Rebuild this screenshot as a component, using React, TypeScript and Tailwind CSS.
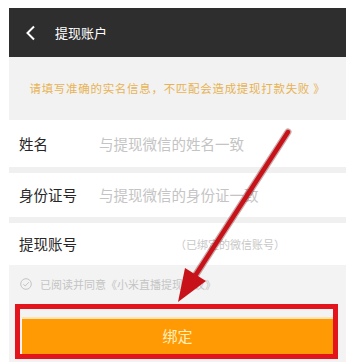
import React from "react";

const font = { fontFamily: '"Noto Sans CJK SC", "Noto Sans", sans-serif' };

const Row = ({ label, hint, hintClass, h }: { label: string; hint: string; hintClass: string; h: string }) => (
  <div className={`flex items-center bg-white ${h}`}>
    <span className="w-[90px] pl-[10px] text-[14.5px] text-[#262626]">{label}</span>
    <span className={hintClass}>{hint}</span>
  </div>
);

const App = () => {
  return (
    <div className="relative w-[353px] h-[362px] overflow-hidden bg-white" style={font}>
      <div className="ml-[9px] w-[337px] pt-[8px] flex flex-col">
        <div className="h-[49px] bg-[#2e2e2e] flex items-center">
          <svg className="ml-[16px]" width="11" height="16" viewBox="0 0 11 16">
            <path d="M9 1.5 L2.5 8 L9 14.5" fill="none" stroke="#fff" strokeWidth="2" />
          </svg>
          <span className="ml-[19px] text-[13px] text-white">提现账户</span>
        </div>
        <div className="h-[63px] bg-[#f2f2f2] flex items-center justify-center">
          <span className="text-[11.5px] text-[#e8b253] tracking-[0.7px]">
            请填写准确的实名信息，不匹配会造成提现打款失败 》
          </span>
        </div>
        <Row label="姓名" hint="与提现微信的姓名一致" h="h-[47px]" hintClass="text-[14.5px] text-[#c4c4c4]" />
        <div className="h-[6px] bg-[#f0f0f0]" />
        <Row label="身份证号" hint="与提现微信的身份证一致" h="h-[44px]" hintClass="text-[14.5px] text-[#c4c4c4]" />
        <div className="h-[6px] bg-[#f0f0f0]" />
        <Row label="提现账号" hint="（已绑定的微信账号）" h="h-[42px]" hintClass="ml-[76px] text-[11px] text-[#c8c8c8]" />
        <div className="h-[97px] bg-[#f3f3f3] flex flex-col">
          <div className="h-[38px] flex items-center pl-[11px] gap-[8px]">
            <svg width="12" height="12" viewBox="0 0 12 12">
              <circle cx="6" cy="6" r="5.3" fill="none" stroke="#c4c4c4" strokeWidth="1" />
              <path d="M3.3 6.2 L5.2 8 L8.8 4.2" fill="none" stroke="#c4c4c4" strokeWidth="1" />
            </svg>
            <span className="text-[11px] text-[#c4c4c4]">已阅读并同意《小米直播提现协议》</span>
          </div>
          <div className="mt-[14px] mx-[13px] h-[37px] bg-[#ff9a05] border-t-2 border-[#fde3b0] flex items-center justify-center">
            <span className="text-[15px] text-[#fff0bf]">绑定</span>
          </div>
        </div>
      </div>
      <div className="absolute left-[15px] top-[304px] w-[323px] h-[55px] border-[5px] border-[#e3141c]" />
      <svg className="absolute left-0 top-0" width="353" height="362" viewBox="0 0 353 362">
        <line x1="288" y1="132" x2="195" y2="276" stroke="#6b0a0a" strokeOpacity="0.35" strokeWidth="7" strokeLinecap="round" />
        <line x1="288" y1="132" x2="195" y2="276" stroke="#c8121a" strokeWidth="4.5" strokeLinecap="round" />
        <polygon points="178,302 206,281 185,268" fill="#c8121a" />
      </svg>
    </div>
  );
};

export default App;
